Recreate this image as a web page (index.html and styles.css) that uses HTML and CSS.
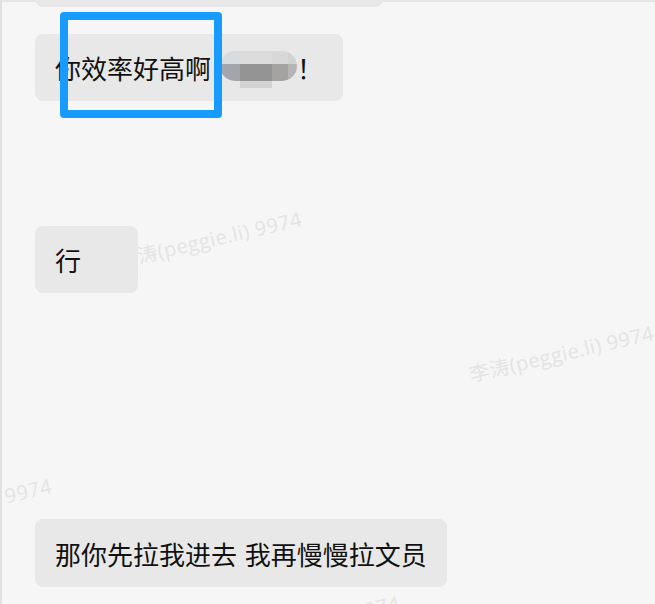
FILE: index.html
```html
<!DOCTYPE html>
<html lang="zh-CN">
<head>
<meta charset="utf-8">
<title>Chat</title>
<link rel="stylesheet" href="styles.css">
</head>
<body>
<div class="chat">
  <div class="watermarks" aria-hidden="true">
    <span class="wm wm-a">李涛(peggie.li) 9974</span>
    <span class="wm wm-b">李涛(peggie.li) 9974</span>
    <span class="wm wm-c">李涛(peggie.li) 9974</span>
    <span class="wm wm-d">李涛(peggie.li) 9974</span>
    <span class="wm wm-e">李涛(peggie.li) 9974</span>
  </div>

  <div class="msg msg-top">
    <div class="bubble bubble-top">&nbsp;</div>
  </div>

  <div class="msg msg-1">
    <div class="bubble">你效率好高啊<span class="mosaic"><span class="mosaic-main"><i class="m m1"></i><i class="m m2"></i><i class="m m3"></i><i class="m m4"></i><i class="m m5"></i><i class="m m6"></i><i class="m m7"></i><i class="m m8"></i></span><span class="mosaic-tail"></span></span>！</div>
  </div>

  <div class="msg msg-2">
    <div class="bubble bubble-short">行</div>
  </div>

  <div class="msg msg-3">
    <div class="bubble bubble-long">那你先拉我进去 我再慢慢拉文员</div>
  </div>

  <div class="highlight"></div>
</div>
</body>
</html>
```
FILE: styles.css
```css
html, body {
  margin: 0;
  padding: 0;
}

body {
  width: 655px;
  height: 604px;
  overflow: hidden;
  background: #f6f6f6;
  font-family: "Noto Sans CJK SC", "Noto Sans", sans-serif;
}

.chat {
  position: relative;
  box-sizing: border-box;
  height: 604px;
  border-left: 2px solid #e0e0e0;
  border-top: 2px solid #e6e6e6;
  padding-left: 33px;
  display: flex;
  flex-direction: column;
  align-items: flex-start;
}

.watermarks {
  position: absolute;
  inset: 0;
  overflow: hidden;
  z-index: 0;
}

.wm {
  position: absolute;
  font-family: "Open Sans", "Noto Sans CJK SC", sans-serif;
  font-size: 20px;
  line-height: 20px;
  letter-spacing: 0.5px;
  color: #e4e4e4;
  white-space: nowrap;
  transform-origin: 0 100%;
  transform: rotate(-13deg);
}

.wm-a { left: 118px; top: 249px; }
.wm-b { left: 470px; top: 363px; }
.wm-c { left: -132px; top: 516px; }
.wm-d { left: 216px; top: 633px; }
.wm-e { left: 368px; top: -19px; }

.msg {
  position: relative;
  z-index: 1;
  display: flex;
}

.msg-top { margin-top: -62px; }
.msg-1 { margin-top: 27px; }
.msg-2 { margin-top: 125px; }
.msg-3 { margin-top: 226px; }

.bubble {
  background: #e8e8e8;
  border-radius: 8px;
  padding: 20px 20px;
  font-size: 26px;
  line-height: 27px;
  color: #111111;
  white-space: nowrap;
}

.bubble-long {
  padding-top: 21px;
  padding-bottom: 20px;
  word-spacing: 2px;
}

.bubble-top {
  width: 308px;
}

.bubble-short {
  box-sizing: border-box;
  min-width: 103px;
}

.mosaic {
  display: inline-flex;
  flex-direction: column;
  vertical-align: top;
  width: 77px;
  height: 37px;
  margin: -3px 0 -7px 9px;
  filter: blur(0.6px);
}

.mosaic-main {
  display: grid;
  grid-template-columns: 20px 32px 16px 9px;
  grid-template-rows: 13px 17px;
  height: 30px;
  border-radius: 15px;
  overflow: hidden;
}

.m { display: block; }
.m1 { background: #d8dbe0; }
.m2 { background: #dcdcdc; }
.m3 { background: #d8d8d8; }
.m4 { background: #d2d2d2; }
.m5 { background: #a2a6ac; }
.m6 { background: #949494; }
.m7 { background: #a5a3a0; }
.m8 { background: #b5b5b5; }

.mosaic-tail {
  display: block;
  width: 32px;
  height: 7px;
  margin-left: 20px;
  background: #d3d3d3;
}

.highlight {
  position: absolute;
  z-index: 2;
  left: 58px;
  top: 10px;
  width: 162px;
  height: 106px;
  box-sizing: border-box;
  border: 8px solid #189bff;
  border-radius: 4px;
}
```
